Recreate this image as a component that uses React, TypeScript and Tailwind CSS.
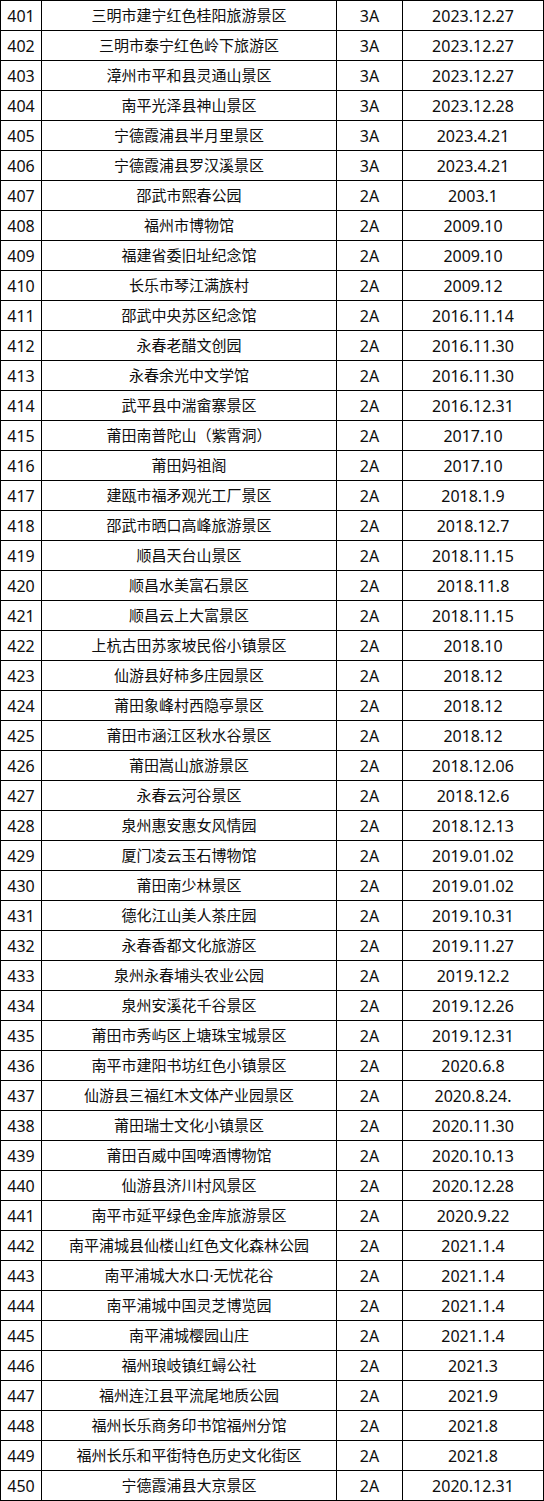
const rows: [number, string, string, string][] = [
  [401, '三明市建宁红色桂阳旅游景区', '3A', '2023.12.27'],
  [402, '三明市泰宁红色岭下旅游区', '3A', '2023.12.27'],
  [403, '漳州市平和县灵通山景区', '3A', '2023.12.27'],
  [404, '南平光泽县神山景区', '3A', '2023.12.28'],
  [405, '宁德霞浦县半月里景区', '3A', '2023.4.21'],
  [406, '宁德霞浦县罗汉溪景区', '3A', '2023.4.21'],
  [407, '邵武市熙春公园', '2A', '2003.1'],
  [408, '福州市博物馆', '2A', '2009.10'],
  [409, '福建省委旧址纪念馆', '2A', '2009.10'],
  [410, '长乐市琴江满族村', '2A', '2009.12'],
  [411, '邵武中央苏区纪念馆', '2A', '2016.11.14'],
  [412, '永春老醋文创园', '2A', '2016.11.30'],
  [413, '永春余光中文学馆', '2A', '2016.11.30'],
  [414, '武平县中湍畲寨景区', '2A', '2016.12.31'],
  [415, '莆田南普陀山（紫霄洞）', '2A', '2017.10'],
  [416, '莆田妈祖阁', '2A', '2017.10'],
  [417, '建瓯市福矛观光工厂景区', '2A', '2018.1.9'],
  [418, '邵武市晒口高峰旅游景区', '2A', '2018.12.7'],
  [419, '顺昌天台山景区', '2A', '2018.11.15'],
  [420, '顺昌水美富石景区', '2A', '2018.11.8'],
  [421, '顺昌云上大富景区', '2A', '2018.11.15'],
  [422, '上杭古田苏家坡民俗小镇景区', '2A', '2018.10'],
  [423, '仙游县好柿多庄园景区', '2A', '2018.12'],
  [424, '莆田象峰村西隐亭景区', '2A', '2018.12'],
  [425, '莆田市涵江区秋水谷景区', '2A', '2018.12'],
  [426, '莆田嵩山旅游景区', '2A', '2018.12.06'],
  [427, '永春云河谷景区', '2A', '2018.12.6'],
  [428, '泉州惠安惠女风情园', '2A', '2018.12.13'],
  [429, '厦门凌云玉石博物馆', '2A', '2019.01.02'],
  [430, '莆田南少林景区', '2A', '2019.01.02'],
  [431, '德化江山美人茶庄园', '2A', '2019.10.31'],
  [432, '永春香都文化旅游区', '2A', '2019.11.27'],
  [433, '泉州永春埔头农业公园', '2A', '2019.12.2'],
  [434, '泉州安溪花千谷景区', '2A', '2019.12.26'],
  [435, '莆田市秀屿区上塘珠宝城景区', '2A', '2019.12.31'],
  [436, '南平市建阳书坊红色小镇景区', '2A', '2020.6.8'],
  [437, '仙游县三福红木文体产业园景区', '2A', '2020.8.24.'],
  [438, '莆田瑞士文化小镇景区', '2A', '2020.11.30'],
  [439, '莆田百威中国啤酒博物馆', '2A', '2020.10.13'],
  [440, '仙游县济川村风景区', '2A', '2020.12.28'],
  [441, '南平市延平绿色金库旅游景区', '2A', '2020.9.22'],
  [442, '南平浦城县仙楼山红色文化森林公园', '2A', '2021.1.4'],
  [443, '南平浦城大水口·无忧花谷', '2A', '2021.1.4'],
  [444, '南平浦城中国灵芝博览园', '2A', '2021.1.4'],
  [445, '南平浦城樱园山庄', '2A', '2021.1.4'],
  [446, '福州琅岐镇红蟳公社', '2A', '2021.3'],
  [447, '福州连江县平流尾地质公园', '2A', '2021.9'],
  [448, '福州长乐商务印书馆福州分馆', '2A', '2021.8'],
  [449, '福州长乐和平街特色历史文化街区', '2A', '2021.8'],
  [450, '宁德霞浦县大京景区', '2A', '2020.12.31'],
];

const cell = 'border border-black p-0 text-center leading-none';

export default function App() {
  return (
    <div className="bg-white font-['Noto_Sans','Noto_Sans_CJK_SC',sans-serif] text-[16px] text-[#0d0d0d]">
      <table className="w-[543px] table-fixed border-collapse">
        <colgroup>
          <col className="w-[41px]" />
          <col className="w-[295px]" />
          <col className="w-[66px]" />
          <col className="w-[141px]" />
        </colgroup>
        <tbody>
          {rows.map(([no, name, level, date]) => (
            <tr key={no} className="h-[30px]">
              <td className={cell}>{no}</td>
              <td className={`${cell} text-[15px]`}>{name}</td>
              <td className={cell}>{level}</td>
              <td className={cell}>{date}</td>
            </tr>
          ))}
        </tbody>
      </table>
    </div>
  );
}
